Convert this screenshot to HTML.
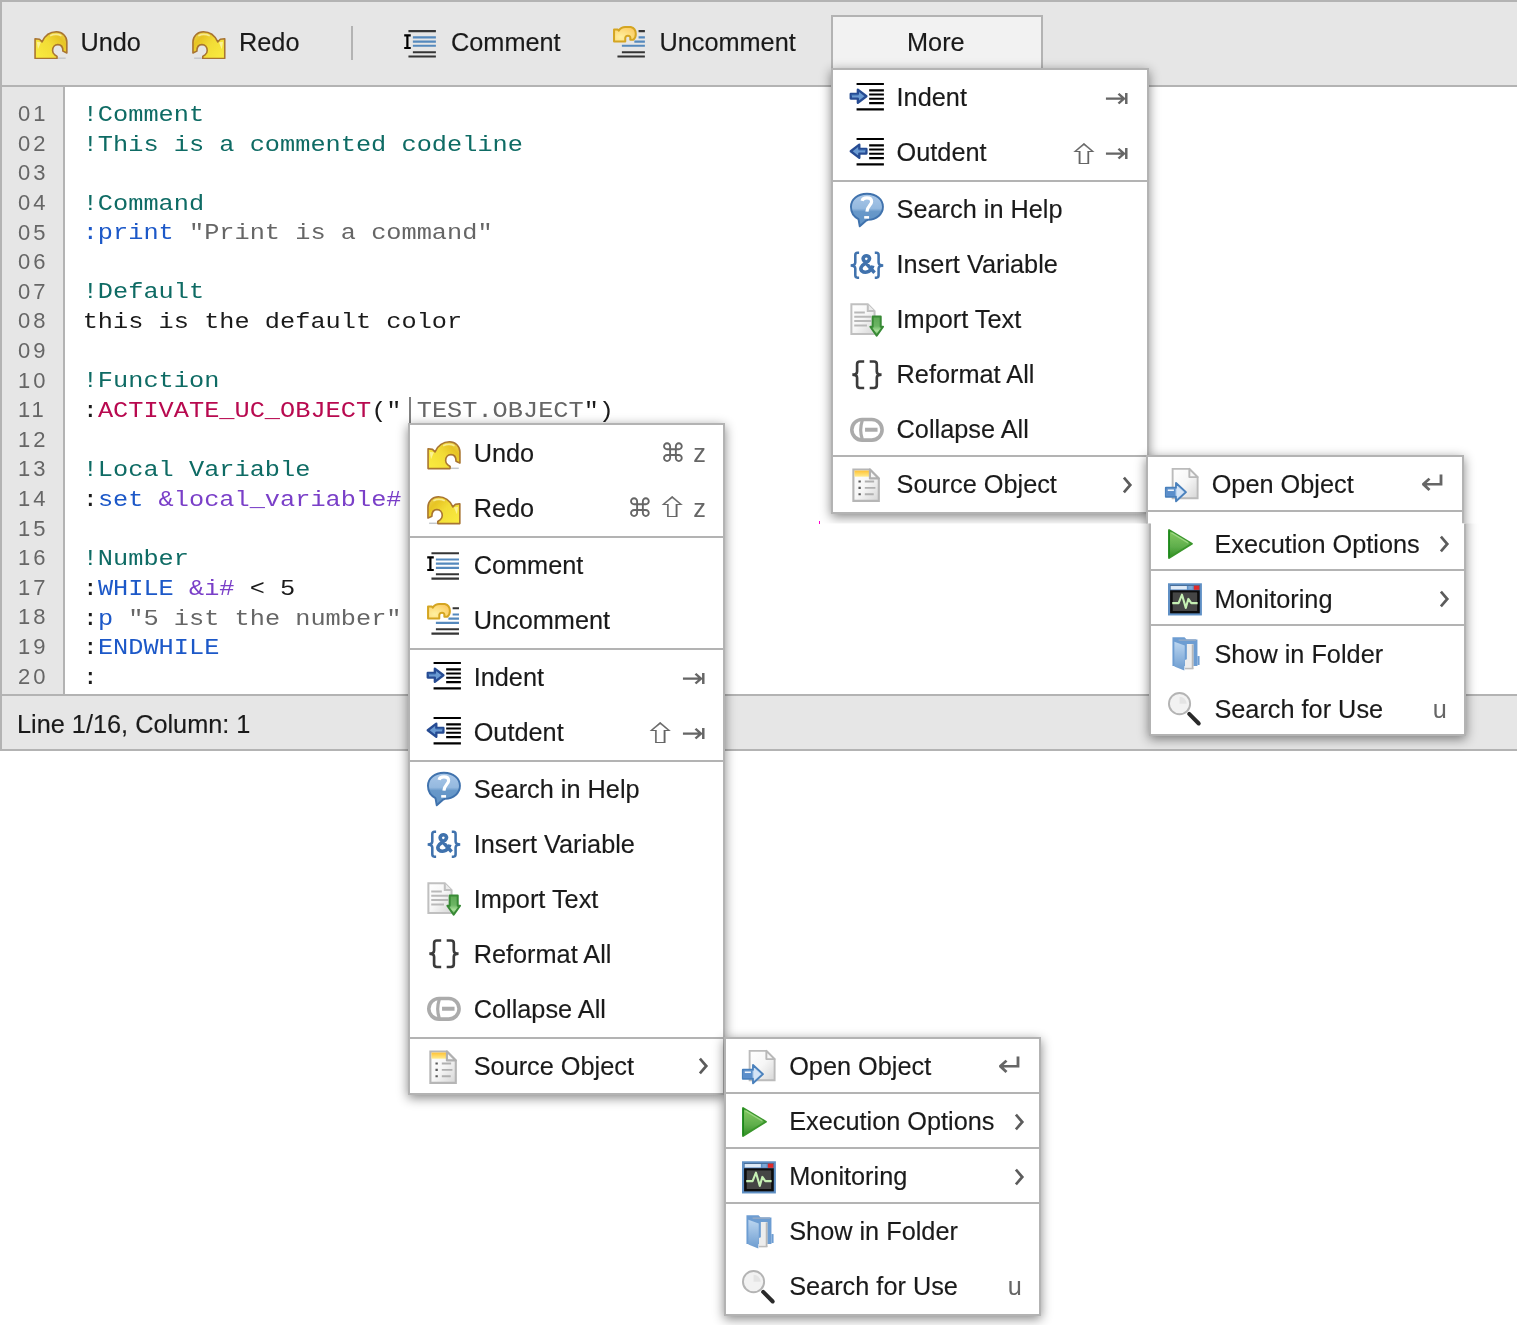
<!DOCTYPE html>
<html lang="en">
<head>
<meta charset="utf-8">
<title>Script Editor</title>
<style>
*{box-sizing:border-box;margin:0;padding:0}
html,body{width:1517px;height:1325px;overflow:hidden;background:#fff}
body{position:relative;will-change:transform;font-family:"Liberation Sans",sans-serif;font-size:25.3px;color:#1a1a1a}
/* ---------- editor chrome ---------- */
#toolbar{position:absolute;left:0;top:0;width:1517px;height:87px;background:#e6e6e6;border-top:2px solid #b3b3b3;border-bottom:2px solid #b3b3b3;border-left:2px solid #b3b3b3}
#toolbar .tb,#more-btn,#status,.menu .lb{-webkit-text-stroke:.15px #1a1a1a}
#toolbar .tb{position:absolute;top:-1px;height:83px;line-height:83px;white-space:nowrap}
#toolbar .tic{position:absolute;width:33.8px;height:33.8px}
#toolbar .tbsep{position:absolute;left:349px;top:24px;width:2px;height:34px;background:#b3b3b3}
#more-btn{position:absolute;left:831px;top:15px;width:212px;height:56px;background:#f2f2f2;border:2px solid #b3b3b3;text-align:center;line-height:50.4px;padding-right:2.4px}
#gutter{position:absolute;left:0;top:87px;width:65px;height:608px;background:#e6e6e6;border-left:2px solid #b3b3b3;border-right:2px solid #b3b3b3;font-family:"Liberation Sans",sans-serif;font-size:22px;letter-spacing:2.95px;color:#666;padding-top:12.1px}
#gutter div{height:29.61px;line-height:29.61px;padding-left:16px;white-space:pre}
#code{position:absolute;left:82.7px;top:101.1px;font-family:"Liberation Mono",monospace;font-size:25.3px;color:#1a1a1a;transform:scaleY(.87);transform-origin:0 0}
#code div{height:34.034px;line-height:34.034px;white-space:pre}
.c{color:#0e6b64}.k{color:#1c58c8}.s{color:#666}.f{color:#b8094f}.v{color:#7a3fc8}
#caret{position:absolute;left:409px;top:397px;width:2px;height:27px;background:#808080}
#speck{position:absolute;left:819px;top:521px;width:1px;height:3px;background:#f0c}
#status{position:absolute;left:0;top:694px;width:1517px;height:57px;background:#e6e6e6;border-top:2px solid #b3b3b3;border-bottom:2px solid #b3b3b3;border-left:2px solid #b3b3b3;line-height:56.4px;padding-left:15px;white-space:nowrap}
/* ---------- menus ---------- */
.menu{position:absolute;background:#fff;border:2px solid #b3b3b3;box-shadow:0 3px 10.5px rgba(0,0,0,.47)}
.menu .sep{position:absolute;left:0;right:0;height:2px;background:#b3b3b3}
.menu .ic{position:absolute;width:33.9px;height:33.9px;overflow:visible}
.menu .lb{position:absolute;height:56px;line-height:56px;white-space:nowrap}
.menu .g{position:absolute;color:#666;font-family:"DejaVu Sans",sans-serif;white-space:nowrap}
.menu .g.n{font-family:"Noto Sans CJK JP","DejaVu Sans",sans-serif;font-weight:700;-webkit-text-stroke:.35px #666}
.menu .k{position:absolute;color:#666;height:56px;line-height:56px}
.menu .chev{position:absolute;overflow:visible}
</style>
</head>
<body>
<svg width="0" height="0" style="position:absolute" aria-hidden="true">
<defs>
<filter id="soft" x="-20%" y="-20%" width="140%" height="140%"><feGaussianBlur stdDeviation="0.3"/></filter>
<filter id="soft2" x="-20%" y="-20%" width="140%" height="140%"><feGaussianBlur stdDeviation="0.42"/></filter>
<linearGradient id="gy" gradientUnits="userSpaceOnUse" x1="2" y1="15" x2="14" y2="3"><stop offset="0" stop-color="#f9ea3e"/><stop offset=".5" stop-color="#f2dc36"/><stop offset=".8" stop-color="#e7c424"/><stop offset="1" stop-color="#ecd04a"/></linearGradient>
<linearGradient id="gb" x1="0" y1="0" x2="0" y2="1"><stop offset="0" stop-color="#a9c7e8"/><stop offset=".45" stop-color="#95b9df"/><stop offset=".55" stop-color="#6798c9"/><stop offset="1" stop-color="#6193c6"/></linearGradient>
<linearGradient id="gg" x1="0" y1="0" x2="0" y2="1"><stop offset="0" stop-color="#5da854"/><stop offset=".5" stop-color="#6cb564"/><stop offset=".75" stop-color="#a9e09a"/><stop offset="1" stop-color="#4fa048"/></linearGradient>
<linearGradient id="gp" x1="0" y1="0" x2="0" y2="1"><stop offset="0" stop-color="#86cc62"/><stop offset=".6" stop-color="#5fae4c"/><stop offset="1" stop-color="#2f8f22"/></linearGradient>
<linearGradient id="gd" x1="0" y1="0" x2="1" y2="1"><stop offset="0" stop-color="#ffffff"/><stop offset=".5" stop-color="#f6f6f6"/><stop offset="1" stop-color="#d6d6d6"/></linearGradient>
<linearGradient id="gf" x1="0" y1="0" x2="0" y2="1"><stop offset="0" stop-color="#bcd6f0"/><stop offset="1" stop-color="#6c9cd0"/></linearGradient>
<linearGradient id="gh" x1="0" y1="0" x2="0" y2="1"><stop offset="0" stop-color="#ffc235"/><stop offset="1" stop-color="#ffeb8c"/></linearGradient>
<radialGradient id="gu" cx=".3" cy=".7" r=".9"><stop offset="0" stop-color="#fff0a0"/><stop offset=".6" stop-color="#fdd977"/><stop offset="1" stop-color="#fcc35c"/></radialGradient>

</defs>
</svg>

<div id="toolbar">
  <svg class="tic" style="left:31.8px;top:23.6px" viewBox="0 0 16 16"><g filter="url(#soft)"><path d="M11.3 15.25 H15" stroke="#c4c8cc" stroke-width=".7"/><path d="M.5 6 L2.6 6.3 L3.8 7.5 C5.1 4.7 7.6 2.75 10.6 2.75 C13.4 2.75 15.55 4.8 15.55 7.6 L15.55 12.8 L13.7 11.9 C13.7 10 12.8 8.8 11.3 8.8 C9.8 8.8 8.8 10 8.8 11.6 C8.8 12.4 9.1 13 9.7 13.5 L10.9 14.4 L10.9 15.4 L.5 15.4 Z" fill="url(#gy)" stroke="#a87430" stroke-width=".75" stroke-linejoin="round"/><path d="M1.3 7.5 L3.3 7.7 L1.9 11 Z" fill="#fdf6a8" opacity=".8"/><path d="M7.6 4.6 Q10.4 3.4 13 4.6" fill="none" stroke="#f8ee9c" stroke-width=".8" opacity=".9"/></g></svg>
  <div class="tb" style="left:78.4px">Undo</div>
  <svg class="tic" style="left:190px;top:23.6px" viewBox="0 0 16 16"><g filter="url(#soft)" transform="translate(16 0) scale(-1 1)"><path d="M11.3 15.25 H15" stroke="#c4c8cc" stroke-width=".7"/><path d="M.5 6 L2.6 6.3 L3.8 7.5 C5.1 4.7 7.6 2.75 10.6 2.75 C13.4 2.75 15.55 4.8 15.55 7.6 L15.55 12.8 L13.7 11.9 C13.7 10 12.8 8.8 11.3 8.8 C9.8 8.8 8.8 10 8.8 11.6 C8.8 12.4 9.1 13 9.7 13.5 L10.9 14.4 L10.9 15.4 L.5 15.4 Z" fill="url(#gy)" stroke="#a87430" stroke-width=".75" stroke-linejoin="round"/><path d="M1.3 7.5 L3.3 7.7 L1.9 11 Z" fill="#fdf6a8" opacity=".8"/><path d="M7.6 4.6 Q10.4 3.4 13 4.6" fill="none" stroke="#f8ee9c" stroke-width=".8" opacity=".9"/></g></svg>
  <div class="tb" style="left:237px">Redo</div>
  <div class="tbsep"></div>
  <svg class="tic" style="left:401.7px;top:23.5px" viewBox="0 0 16 16"><g filter="url(#soft)"><path d="M2.1 2.45H15.1M4.2 12.4H15.1M2.1 14.45H15.1" stroke="#353535" stroke-width="1"/><path d="M4.2 5.4H15.1M4.2 7.4H15.1M4.2 9.37H15.1" stroke="#5589bd" stroke-width="1"/><path d="M.1 4.45H3.2M.1 10.4H3.2" stroke="#000" stroke-width="1"/><path d="M1.6 4.45V10.4" stroke="#000" stroke-width="1.05"/></g></svg>
  <div class="tb" style="left:449px">Comment</div>
  <svg class="tic" style="left:610.9px;top:23.5px" viewBox="0 0 16 16"><g filter="url(#soft)"><path d="M12.1 2.45H15.1M4.2 12.4H15.1M2.1 14.45H15.1" stroke="#353535" stroke-width="1"/><path d="M12.1 5.4H15.1M10.1 7.4H15.1M4.2 9.37H15.1" stroke="#5589bd" stroke-width="1"/><path d="M.5 1.6 L2.2 1.6 L2.7 2.2 C3.5 1 4.6 .45 5.8 .45 L8.4 .45 C9.9 .8 10.8 2.2 10.8 3.8 C10.8 5.1 10.3 6 9.6 6.5 L8.2 6.5 L8.2 5.4 C8.1 4.8 7.7 4.6 7.1 4.6 C6.4 4.6 5.9 5 5.8 5.6 L5.8 7.3 L.5 7.3 Z" fill="url(#gu)" stroke="#d4a520" stroke-width=".95" stroke-linejoin="round"/></g></svg>
  <div class="tb" style="left:657.4px">Uncomment</div>
</div>
<div id="more-btn">More</div>

<div id="gutter"><div>01</div><div>02</div><div>03</div><div>04</div><div>05</div><div>06</div><div>07</div><div>08</div><div>09</div><div>10</div><div>11</div><div>12</div><div>13</div><div>14</div><div>15</div><div>16</div><div>17</div><div>18</div><div>19</div><div>20</div></div>

<div id="code"><div class="c">!Comment</div><div class="c">!This is a commented codeline</div><div> </div><div class="c">!Command</div><div><span class="k">:print</span> <span class="s">"Print is a command"</span></div><div> </div><div class="c">!Default</div><div>this is the default color</div><div> </div><div class="c">!Function</div><div>:<span class="f">ACTIVATE_UC_OBJECT</span>("<span class="s"> TEST.OBJECT</span>")</div><div> </div><div class="c">!Local Variable</div><div>:<span class="k">set</span> <span class="v">&amp;local_variable#</span></div><div> </div><div class="c">!Number</div><div>:<span class="k">WHILE</span> <span class="v">&amp;i#</span> &lt; 5</div><div>:<span class="k">p</span> <span class="s">"5 ist the number"</span></div><div>:<span class="k">ENDWHILE</span></div><div>:</div></div>
<div id="caret"></div>

<div id="status">Line 1/16, Column: 1</div>
<div id="speck"></div>


<div class="menu" id="m-more" style="left:831px;top:68px;width:318px;height:446px;clip-path:inset(-40px -40px -9.5px -40px);">
<div class="sep" style="top:110px"></div>
<div class="sep" style="top:385px"></div>
<svg class="ic" style="left:16.8px;top:10.9px" viewBox="0 0 16 16"><g filter="url(#soft)" transform="translate(0 -.3)"><path d="M3.1 1.7H16M3.1 13.72H16M9.05 4.7H16M9.05 6.7H16M9.05 8.7H16M9.05 10.72H16" stroke="#000" stroke-width="1"/><path d="M.35 6.4 H3.7 V4.4 L7.75 7.5 L3.7 10.6 V8.6 H.35 Z" fill="#6a9ad2" stroke="#264c93" stroke-width="1.1" stroke-linejoin="round"/><path d="M.6 6.9 H4" stroke="#3f6fb3" stroke-width=".5"/></g></svg>
<span class="lb" style="left:63.6px;top:-0.65px">Indent</span>
<span class="g" style="left:273.45px;top:15.21px;font-size:26.2px;line-height:26.2px;transform:scale(1.13,1);transform-origin:11px 13.89px">⇥</span>
<svg class="ic" style="left:16.8px;top:65.9px" viewBox="0 0 16 16"><g filter="url(#soft)" transform="translate(0 -.3)"><path d="M3.1 1.7H16M3.1 13.72H16M9.05 4.7H16M9.05 6.7H16M9.05 8.7H16M9.05 10.72H16" stroke="#000" stroke-width="1"/><path d="M7.75 6.4 H4.4 V4.4 L.35 7.5 L4.4 10.6 V8.6 H7.75 Z" fill="#6a9ad2" stroke="#264c93" stroke-width="1.1" stroke-linejoin="round"/><path d="M7.5 6.9 H4.1" stroke="#3f6fb3" stroke-width=".5"/></g></svg>
<span class="lb" style="left:63.6px;top:54.35px">Outdent</span>
<span class="g n" style="left:235.83px;top:66.93px;font-size:30.4px;line-height:30.4px;transform:scale(1,0.7);transform-origin:15.2px 16.57px">⇧</span><span class="g" style="left:273.45px;top:70.21px;font-size:26.2px;line-height:26.2px;transform:scale(1.13,1);transform-origin:11px 13.89px">⇥</span>
<svg class="ic" style="left:16.8px;top:122.9px" viewBox="0 0 16 16"><g filter="url(#soft)"><path d="M8 .35 C12.4 .35 15.55 3 15.55 6.5 C15.55 9.9 12.6 12.6 8.4 12.7 L7.4 13.2 L4.6 15.7 L4 12.3 C1.8 11.2 .45 9 .45 6.5 C.45 3 3.6 .35 8 .35 Z" fill="url(#gb)" stroke="#3f72ad" stroke-width=".9" stroke-linejoin="round"/><path d="M5.7 3.7 C5.9 2.8 6.8 2.3 8 2.3 C9.4 2.3 10.2 3 10.2 4.1 C10.2 5.6 8.1 6.2 8 8.8" fill="none" stroke="#fff" stroke-width="1.5"/><rect x="6.7" y="10.9" width="2.3" height="1.2" fill="#fff"/></g></svg>
<span class="lb" style="left:63.6px;top:111.35px">Search in Help</span>
<svg class="ic" style="left:16.8px;top:177.9px" viewBox="0 0 16 16"><g filter="url(#soft)" fill="none" stroke="#3f72ad" stroke-width="1.2"><path d="M4.3 2.2 H3.5 Q2.5 2.2 2.5 3.3 V6.9 Q2.5 8.3 .3 8.3 Q2.5 8.3 2.5 9.7 V12.9 Q2.5 14 3.5 14 H4.3"/><path d="M11.7 2.2 H12.5 Q13.5 2.2 13.5 3.3 V6.9 Q13.5 8.3 15.7 8.3 Q13.5 8.3 13.5 9.7 V12.9 Q13.5 14 12.5 14 H11.7"/><path d="M11.6 11.7 L6.7 6.2 Q5.7 4.9 6.7 4 Q7.7 3.3 8.8 4 Q9.7 5 8.7 6.1 L5.8 8.3 Q4.6 9.6 5.5 10.8 Q6.8 11.9 8.6 11.2 Q10.3 10.3 10.8 8.3" stroke-width="1.65"/></g></svg>
<span class="lb" style="left:63.6px;top:166.35px">Insert Variable</span>
<svg class="ic" style="left:16.8px;top:232.9px" viewBox="0 0 16 16"><g filter="url(#soft)"><path d="M.65 .6 H8.4 L11.6 3.8 V14.6 H.65 Z" fill="url(#gd)" stroke="#c0c0c0" stroke-width=".95"/><path d="M8.4 .6 V3.8 H11.6" fill="#ececec" stroke="#c0c0c0" stroke-width=".95"/><path d="M2 4.5H7M2 6.5H10M2 8.5H10M2 10.6H8" stroke="#b9b9b9" stroke-width=".95"/><path d="M10.7 6.4 H14.5 V11.2 H15.6 L12.6 15.4 L9.6 11.2 H10.7 Z" fill="url(#gg)" stroke="#388a36" stroke-width=".95" stroke-linejoin="round"/></g></svg>
<span class="lb" style="left:63.6px;top:221.35px">Import Text</span>
<svg class="ic" style="left:16.8px;top:287.9px" viewBox="0 0 16 16"><g filter="url(#soft)" transform="translate(0 -.35)" fill="none" stroke="#3a3a3a" stroke-width="1.25"><path d="M6.7 2 H4.7 Q3.35 2 3.35 3.3 V6.7 Q3.35 8.2 1.1 8.2 Q3.35 8.2 3.35 9.7 V13.2 Q3.35 14.5 4.7 14.5 H6.7"/><path d="M9.3 2 H11.3 Q12.65 2 12.65 3.3 V6.7 Q12.65 8.2 14.9 8.2 Q12.65 8.2 12.65 9.7 V13.2 Q12.65 14.5 11.3 14.5 H9.3"/></g></svg>
<span class="lb" style="left:63.6px;top:276.35px">Reformat All</span>
<svg class="ic" style="left:16.8px;top:342.9px" viewBox="0 0 16 16"><g filter="url(#soft)" transform="translate(0 -.4)" fill="none" stroke="#ababab"><rect x=".85" y="3.5" width="14.3" height="9.7" rx="4.85" ry="4.85" stroke-width="1.7" fill="#fff"/><path d="M5.8 3.9 Q4.3 8.3 5.8 12.8" stroke-width="1.5"/><path d="M7.1 8.3 H13" stroke-width="1.9"/></g></svg>
<span class="lb" style="left:63.6px;top:331.35px">Collapse All</span>
<svg class="ic" style="left:16.8px;top:397.9px" viewBox="0 0 16 16"><g filter="url(#soft)"><path d="M1.6 .7 H9.4 L13.6 4.9 V15.5 H1.6 Z" fill="url(#gd)" stroke="#b6b6b6" stroke-width="1"/><rect x="2.1" y="1.2" width="7" height="2.9" fill="url(#gh)"/><path d="M9.4 .7 V4.9 H13.6 Z" fill="#f6f6f6" stroke="#b0b0b0" stroke-width="1" stroke-linejoin="round"/><path d="M4 6.4H5.1M4 9.4H5.1M4 12.4H5.1" stroke="#5a5a5a" stroke-width="1"/><path d="M7 6.4H11.4M7 9.4H12M7 12.4H11.2" stroke="#b0b0b0" stroke-width=".9"/></g></svg>
<span class="lb" style="left:63.6px;top:386.35px">Source Object</span>
<svg class="chev" style="left:290px;top:405.7px" viewBox="0 0 10 18" width="10" height="18"><path d="M.9 1.6 L7.3 9 L.9 16.4" fill="none" stroke="#5c5c5c" stroke-width="2.7"/></svg>
</div>

<div class="menu" id="m-moresub-a" style="left:1146px;top:455px;width:318px;height:279px;clip-path:inset(-40px -40px 210.5px -40px);">
<div class="sep" style="top:53px"></div>
<svg class="ic" style="left:16.9px;top:10.65px" viewBox="0 0 16 16"><g filter="url(#soft)"><path d="M3.6 .4 H11.5 L15.4 4.3 V14.3 H3.6 Z" fill="url(#gd)" stroke="#bbbbbb" stroke-width=".9"/><path d="M11.5 .4 V4.3 H15.4 Z" fill="#f6f6f6" stroke="#b8b8b8" stroke-width=".9" stroke-linejoin="round"/><path d="M.4 9.3 H5.2 V7.1 L9.9 11.4 L5.2 15.7 V13.6 H.4 Z" fill="#b9d3ef" stroke="#4a80bc" stroke-width=".9" stroke-linejoin="round"/><path d="M.8 9.8 H5 V13.2 H.8 Z" fill="#5a8ecb"/><path d="M1.3 10.5 H4.2" stroke="#eef4fc" stroke-width=".75"/><path d="M5.6 8.4 L8.8 11.4 L5.6 14.4 Z" fill="#dce9f7" opacity=".8"/></g></svg>
<span class="lb" style="left:63.7px;top:-0.9px">Open Object</span>
<span class="g" style="left:272.99px;top:11.17px;font-size:31px;line-height:31px;transform:scale(1.08,1);transform-origin:10.85px 14.88px">↵</span>
</div>

<div class="menu" id="m-moresub-b" style="left:1149px;top:459px;width:317px;height:277px;clip-path:inset(64.5px -40px -40px -40px);">
<div class="sep" style="top:108px"></div>
<div class="sep" style="top:163px"></div>
<svg class="ic" style="left:16.6px;top:66.05px" viewBox="0 0 16 16"><g filter="url(#soft)"><path d="M.5 1.4 L11.3 7.9 L.5 14.6 Z" fill="url(#gp)" stroke="#3a962c" stroke-width=".9" stroke-linejoin="round"/><path d="M.55 1.6 V14.4" stroke="#1f8a1f" stroke-width=".8"/><path d="M1.6 2.7 L9.6 7.5" stroke="#a6dc8c" stroke-width=".7" opacity=".8"/></g></svg>
<span class="lb" style="left:63.4px;top:54.5px">Execution Options</span>
<svg class="chev" style="left:289px;top:73.85px" viewBox="0 0 10 18" width="10" height="18"><path d="M.9 1.6 L7.3 9 L.9 16.4" fill="none" stroke="#5c5c5c" stroke-width="2.7"/></svg>
<svg class="ic" style="left:16.6px;top:121.1px" viewBox="0 0 16 16"><g filter="url(#soft)" transform="translate(0 .6)"><rect x=".5" y=".5" width="15" height="14.2" fill="#0a0a0a" stroke="#5f8fc4" stroke-width="1"/><rect x="1" y="1" width="14" height="2.3" fill="#5f8fc4"/><rect x="1.3" y="1.3" width="7.6" height="1.6" fill="#dfeaf6"/><rect x="9.6" y="1.3" width="2" height="1.6" fill="#7fa8d4"/><rect x="12.2" y="1.1" width="2.6" height="2" fill="#e02a2a"/><rect x="2.2" y="4.3" width="11.6" height="8.8" fill="#444"/><path d="M2 9.4 H5 L6.6 5.4 L8.4 11.6 L9.6 7.4 L11 9.4 H14" fill="none" stroke="#c6f0b4" stroke-width="1" stroke-linejoin="round"/></g></svg>
<span class="lb" style="left:63.4px;top:109.55px">Monitoring</span>
<svg class="chev" style="left:289px;top:128.9px" viewBox="0 0 10 18" width="10" height="18"><path d="M.9 1.6 L7.3 9 L.9 16.4" fill="none" stroke="#5c5c5c" stroke-width="2.7"/></svg>
<svg class="ic" style="left:16.6px;top:176.1px" viewBox="0 0 16 16"><g filter="url(#soft)" transform="translate(0 .3)"><path d="M2.1 -.2 H7.8 L8.8 .9 H13.9 V13.4 H2.1 Z" fill="#6d9dd2"/><rect x="13.9" y="8.7" width="1" height="4.2" fill="#6d9dd2"/><path d="M5 1.2 H13.2" stroke="#8fa9c8" stroke-width=".8"/><path d="M8.9 3 H12 V14.9 H8 V10.6 L8.9 10.2 Z" fill="#ededed"/><path d="M11.6 3.2 V14.7" stroke="#b8b8b8" stroke-width=".8"/><path d="M8 14.6 H12" stroke="#bdbdbd" stroke-width=".7"/><path d="M3 1.9 L7.9 3.7 V10 L7.7 15.5 L3 13.6 Z" fill="url(#gf)"/></g></svg>
<span class="lb" style="left:63.4px;top:164.55px">Show in Folder</span>
<svg class="ic" style="left:16.6px;top:231.15px" viewBox="0 0 16 16"><g filter="url(#soft)" transform="translate(0 .35)"><circle cx="5.45" cy="5.15" r="5" fill="#f2f2f2" stroke="#b4b4b4" stroke-width=".9"/><path d="M5.45 1.9 A3.3 3.3 0 0 1 8.8 5.15 H5.45 Z" fill="#e4e4e4"/><path d="M10 10 L14.5 14.5" stroke="#2a2a2a" stroke-width="1.9" stroke-linecap="round"/></g></svg>
<span class="lb" style="left:63.4px;top:219.6px">Search for Use</span>
<span class="k" style="left:281.8px;top:219.6px">u</span>
</div>

<div class="menu" id="m-ctx" style="left:408px;top:423px;width:317px;height:672px;">
<div class="sep" style="top:111px"></div>
<div class="sep" style="top:223px"></div>
<div class="sep" style="top:335px"></div>
<div class="sep" style="top:612px"></div>
<svg class="ic" style="left:16.9px;top:11.4px" viewBox="0 0 16 16"><g filter="url(#soft)"><path d="M11.3 15.25 H15" stroke="#c4c8cc" stroke-width=".7"/><path d="M.5 6 L2.6 6.3 L3.8 7.5 C5.1 4.7 7.6 2.75 10.6 2.75 C13.4 2.75 15.55 4.8 15.55 7.6 L15.55 12.8 L13.7 11.9 C13.7 10 12.8 8.8 11.3 8.8 C9.8 8.8 8.8 10 8.8 11.6 C8.8 12.4 9.1 13 9.7 13.5 L10.9 14.4 L10.9 15.4 L.5 15.4 Z" fill="url(#gy)" stroke="#a87430" stroke-width=".75" stroke-linejoin="round"/><path d="M1.3 7.5 L3.3 7.7 L1.9 11 Z" fill="#fdf6a8" opacity=".8"/><path d="M7.6 4.6 Q10.4 3.4 13 4.6" fill="none" stroke="#f8ee9c" stroke-width=".8" opacity=".9"/></g></svg>
<span class="lb" style="left:63.7px;top:-0.15px">Undo</span>
<span class="g" style="left:249.9px;top:16.23px;font-size:25.8px;line-height:25.8px">⌘</span><span class="k" style="left:283.22px;top:-0.15px">z</span>
<svg class="ic" style="left:16.9px;top:66.4px" viewBox="0 0 16 16"><g filter="url(#soft)" transform="translate(16 0) scale(-1 1)"><path d="M11.3 15.25 H15" stroke="#c4c8cc" stroke-width=".7"/><path d="M.5 6 L2.6 6.3 L3.8 7.5 C5.1 4.7 7.6 2.75 10.6 2.75 C13.4 2.75 15.55 4.8 15.55 7.6 L15.55 12.8 L13.7 11.9 C13.7 10 12.8 8.8 11.3 8.8 C9.8 8.8 8.8 10 8.8 11.6 C8.8 12.4 9.1 13 9.7 13.5 L10.9 14.4 L10.9 15.4 L.5 15.4 Z" fill="url(#gy)" stroke="#a87430" stroke-width=".75" stroke-linejoin="round"/><path d="M1.3 7.5 L3.3 7.7 L1.9 11 Z" fill="#fdf6a8" opacity=".8"/><path d="M7.6 4.6 Q10.4 3.4 13 4.6" fill="none" stroke="#f8ee9c" stroke-width=".8" opacity=".9"/></g></svg>
<span class="lb" style="left:63.7px;top:54.85px">Redo</span>
<span class="g" style="left:216.9px;top:71.23px;font-size:25.8px;line-height:25.8px">⌘</span><span class="g n" style="left:247.03px;top:65.43px;font-size:30.4px;line-height:30.4px;transform:scale(1,0.7);transform-origin:15.2px 16.57px">⇧</span><span class="k" style="left:283.22px;top:54.85px">z</span>
<svg class="ic" style="left:16.9px;top:123.4px" viewBox="0 0 16 16"><g filter="url(#soft)"><path d="M2.1 2.45H15.1M4.2 12.4H15.1M2.1 14.45H15.1" stroke="#353535" stroke-width="1"/><path d="M4.2 5.4H15.1M4.2 7.4H15.1M4.2 9.37H15.1" stroke="#5589bd" stroke-width="1"/><path d="M.1 4.45H3.2M.1 10.4H3.2" stroke="#000" stroke-width="1"/><path d="M1.6 4.45V10.4" stroke="#000" stroke-width="1.05"/></g></svg>
<span class="lb" style="left:63.7px;top:111.85px">Comment</span>
<svg class="ic" style="left:16.9px;top:178.4px" viewBox="0 0 16 16"><g filter="url(#soft)"><path d="M12.1 2.45H15.1M4.2 12.4H15.1M2.1 14.45H15.1" stroke="#353535" stroke-width="1"/><path d="M12.1 5.4H15.1M10.1 7.4H15.1M4.2 9.37H15.1" stroke="#5589bd" stroke-width="1"/><path d="M.5 1.6 L2.2 1.6 L2.7 2.2 C3.5 1 4.6 .45 5.8 .45 L8.4 .45 C9.9 .8 10.8 2.2 10.8 3.8 C10.8 5.1 10.3 6 9.6 6.5 L8.2 6.5 L8.2 5.4 C8.1 4.8 7.7 4.6 7.1 4.6 C6.4 4.6 5.9 5 5.8 5.6 L5.8 7.3 L.5 7.3 Z" fill="url(#gu)" stroke="#d4a520" stroke-width=".95" stroke-linejoin="round"/></g></svg>
<span class="lb" style="left:63.7px;top:166.85px">Uncomment</span>
<svg class="ic" style="left:16.9px;top:235.4px" viewBox="0 0 16 16"><g filter="url(#soft)" transform="translate(0 -.3)"><path d="M3.1 1.7H16M3.1 13.72H16M9.05 4.7H16M9.05 6.7H16M9.05 8.7H16M9.05 10.72H16" stroke="#000" stroke-width="1"/><path d="M.35 6.4 H3.7 V4.4 L7.75 7.5 L3.7 10.6 V8.6 H.35 Z" fill="#6a9ad2" stroke="#264c93" stroke-width="1.1" stroke-linejoin="round"/><path d="M.6 6.9 H4" stroke="#3f6fb3" stroke-width=".5"/></g></svg>
<span class="lb" style="left:63.7px;top:223.85px">Indent</span>
<span class="g" style="left:272.65px;top:239.71px;font-size:26.2px;line-height:26.2px;transform:scale(1.13,1);transform-origin:11px 13.89px">⇥</span>
<svg class="ic" style="left:16.9px;top:290.4px" viewBox="0 0 16 16"><g filter="url(#soft)" transform="translate(0 -.3)"><path d="M3.1 1.7H16M3.1 13.72H16M9.05 4.7H16M9.05 6.7H16M9.05 8.7H16M9.05 10.72H16" stroke="#000" stroke-width="1"/><path d="M7.75 6.4 H4.4 V4.4 L.35 7.5 L4.4 10.6 V8.6 H7.75 Z" fill="#6a9ad2" stroke="#264c93" stroke-width="1.1" stroke-linejoin="round"/><path d="M7.5 6.9 H4.1" stroke="#3f6fb3" stroke-width=".5"/></g></svg>
<span class="lb" style="left:63.7px;top:278.85px">Outdent</span>
<span class="g n" style="left:235.03px;top:291.43px;font-size:30.4px;line-height:30.4px;transform:scale(1,0.7);transform-origin:15.2px 16.57px">⇧</span><span class="g" style="left:272.65px;top:294.71px;font-size:26.2px;line-height:26.2px;transform:scale(1.13,1);transform-origin:11px 13.89px">⇥</span>
<svg class="ic" style="left:16.9px;top:347.4px" viewBox="0 0 16 16"><g filter="url(#soft)"><path d="M8 .35 C12.4 .35 15.55 3 15.55 6.5 C15.55 9.9 12.6 12.6 8.4 12.7 L7.4 13.2 L4.6 15.7 L4 12.3 C1.8 11.2 .45 9 .45 6.5 C.45 3 3.6 .35 8 .35 Z" fill="url(#gb)" stroke="#3f72ad" stroke-width=".9" stroke-linejoin="round"/><path d="M5.7 3.7 C5.9 2.8 6.8 2.3 8 2.3 C9.4 2.3 10.2 3 10.2 4.1 C10.2 5.6 8.1 6.2 8 8.8" fill="none" stroke="#fff" stroke-width="1.5"/><rect x="6.7" y="10.9" width="2.3" height="1.2" fill="#fff"/></g></svg>
<span class="lb" style="left:63.7px;top:335.85px">Search in Help</span>
<svg class="ic" style="left:16.9px;top:402.4px" viewBox="0 0 16 16"><g filter="url(#soft)" fill="none" stroke="#3f72ad" stroke-width="1.2"><path d="M4.3 2.2 H3.5 Q2.5 2.2 2.5 3.3 V6.9 Q2.5 8.3 .3 8.3 Q2.5 8.3 2.5 9.7 V12.9 Q2.5 14 3.5 14 H4.3"/><path d="M11.7 2.2 H12.5 Q13.5 2.2 13.5 3.3 V6.9 Q13.5 8.3 15.7 8.3 Q13.5 8.3 13.5 9.7 V12.9 Q13.5 14 12.5 14 H11.7"/><path d="M11.6 11.7 L6.7 6.2 Q5.7 4.9 6.7 4 Q7.7 3.3 8.8 4 Q9.7 5 8.7 6.1 L5.8 8.3 Q4.6 9.6 5.5 10.8 Q6.8 11.9 8.6 11.2 Q10.3 10.3 10.8 8.3" stroke-width="1.65"/></g></svg>
<span class="lb" style="left:63.7px;top:390.85px">Insert Variable</span>
<svg class="ic" style="left:16.9px;top:457.4px" viewBox="0 0 16 16"><g filter="url(#soft)"><path d="M.65 .6 H8.4 L11.6 3.8 V14.6 H.65 Z" fill="url(#gd)" stroke="#c0c0c0" stroke-width=".95"/><path d="M8.4 .6 V3.8 H11.6" fill="#ececec" stroke="#c0c0c0" stroke-width=".95"/><path d="M2 4.5H7M2 6.5H10M2 8.5H10M2 10.6H8" stroke="#b9b9b9" stroke-width=".95"/><path d="M10.7 6.4 H14.5 V11.2 H15.6 L12.6 15.4 L9.6 11.2 H10.7 Z" fill="url(#gg)" stroke="#388a36" stroke-width=".95" stroke-linejoin="round"/></g></svg>
<span class="lb" style="left:63.7px;top:445.85px">Import Text</span>
<svg class="ic" style="left:16.9px;top:512.4px" viewBox="0 0 16 16"><g filter="url(#soft)" transform="translate(0 -.35)" fill="none" stroke="#3a3a3a" stroke-width="1.25"><path d="M6.7 2 H4.7 Q3.35 2 3.35 3.3 V6.7 Q3.35 8.2 1.1 8.2 Q3.35 8.2 3.35 9.7 V13.2 Q3.35 14.5 4.7 14.5 H6.7"/><path d="M9.3 2 H11.3 Q12.65 2 12.65 3.3 V6.7 Q12.65 8.2 14.9 8.2 Q12.65 8.2 12.65 9.7 V13.2 Q12.65 14.5 11.3 14.5 H9.3"/></g></svg>
<span class="lb" style="left:63.7px;top:500.85px">Reformat All</span>
<svg class="ic" style="left:16.9px;top:567.4px" viewBox="0 0 16 16"><g filter="url(#soft)" transform="translate(0 -.4)" fill="none" stroke="#ababab"><rect x=".85" y="3.5" width="14.3" height="9.7" rx="4.85" ry="4.85" stroke-width="1.7" fill="#fff"/><path d="M5.8 3.9 Q4.3 8.3 5.8 12.8" stroke-width="1.5"/><path d="M7.1 8.3 H13" stroke-width="1.9"/></g></svg>
<span class="lb" style="left:63.7px;top:555.85px">Collapse All</span>
<svg class="ic" style="left:16.9px;top:624.5px" viewBox="0 0 16 16"><g filter="url(#soft)"><path d="M1.6 .7 H9.4 L13.6 4.9 V15.5 H1.6 Z" fill="url(#gd)" stroke="#b6b6b6" stroke-width="1"/><rect x="2.1" y="1.2" width="7" height="2.9" fill="url(#gh)"/><path d="M9.4 .7 V4.9 H13.6 Z" fill="#f6f6f6" stroke="#b0b0b0" stroke-width="1" stroke-linejoin="round"/><path d="M4 6.4H5.1M4 9.4H5.1M4 12.4H5.1" stroke="#5a5a5a" stroke-width="1"/><path d="M7 6.4H11.4M7 9.4H12M7 12.4H11.2" stroke="#b0b0b0" stroke-width=".9"/></g></svg>
<span class="lb" style="left:63.7px;top:612.95px">Source Object</span>
<svg class="chev" style="left:289.2px;top:632.3px" viewBox="0 0 10 18" width="10" height="18"><path d="M.9 1.6 L7.3 9 L.9 16.4" fill="none" stroke="#5c5c5c" stroke-width="2.7"/></svg>
</div>

<div class="menu" id="m-ctxsub" style="left:724px;top:1037px;width:317px;height:279px;">
<div class="sep" style="top:53px"></div>
<div class="sep" style="top:108px"></div>
<div class="sep" style="top:163px"></div>
<svg class="ic" style="left:16.4px;top:10.75px" viewBox="0 0 16 16"><g filter="url(#soft)"><path d="M3.6 .4 H11.5 L15.4 4.3 V14.3 H3.6 Z" fill="url(#gd)" stroke="#bbbbbb" stroke-width=".9"/><path d="M11.5 .4 V4.3 H15.4 Z" fill="#f6f6f6" stroke="#b8b8b8" stroke-width=".9" stroke-linejoin="round"/><path d="M.4 9.3 H5.2 V7.1 L9.9 11.4 L5.2 15.7 V13.6 H.4 Z" fill="#b9d3ef" stroke="#4a80bc" stroke-width=".9" stroke-linejoin="round"/><path d="M.8 9.8 H5 V13.2 H.8 Z" fill="#5a8ecb"/><path d="M1.3 10.5 H4.2" stroke="#eef4fc" stroke-width=".75"/><path d="M5.6 8.4 L8.8 11.4 L5.6 14.4 Z" fill="#dce9f7" opacity=".8"/></g></svg>
<span class="lb" style="left:63.2px;top:-0.8px">Open Object</span>
<span class="g" style="left:272.19px;top:11.27px;font-size:31px;line-height:31px;transform:scale(1.08,1);transform-origin:10.85px 14.88px">↵</span>
<svg class="ic" style="left:16.4px;top:65.75px" viewBox="0 0 16 16"><g filter="url(#soft)"><path d="M.5 1.4 L11.3 7.9 L.5 14.6 Z" fill="url(#gp)" stroke="#3a962c" stroke-width=".9" stroke-linejoin="round"/><path d="M.55 1.6 V14.4" stroke="#1f8a1f" stroke-width=".8"/><path d="M1.6 2.7 L9.6 7.5" stroke="#a6dc8c" stroke-width=".7" opacity=".8"/></g></svg>
<span class="lb" style="left:63.2px;top:54.2px">Execution Options</span>
<svg class="chev" style="left:289px;top:73.55px" viewBox="0 0 10 18" width="10" height="18"><path d="M.9 1.6 L7.3 9 L.9 16.4" fill="none" stroke="#5c5c5c" stroke-width="2.7"/></svg>
<svg class="ic" style="left:16.4px;top:120.8px" viewBox="0 0 16 16"><g filter="url(#soft)" transform="translate(0 .6)"><rect x=".5" y=".5" width="15" height="14.2" fill="#0a0a0a" stroke="#5f8fc4" stroke-width="1"/><rect x="1" y="1" width="14" height="2.3" fill="#5f8fc4"/><rect x="1.3" y="1.3" width="7.6" height="1.6" fill="#dfeaf6"/><rect x="9.6" y="1.3" width="2" height="1.6" fill="#7fa8d4"/><rect x="12.2" y="1.1" width="2.6" height="2" fill="#e02a2a"/><rect x="2.2" y="4.3" width="11.6" height="8.8" fill="#444"/><path d="M2 9.4 H5 L6.6 5.4 L8.4 11.6 L9.6 7.4 L11 9.4 H14" fill="none" stroke="#c6f0b4" stroke-width="1" stroke-linejoin="round"/></g></svg>
<span class="lb" style="left:63.2px;top:109.25px">Monitoring</span>
<svg class="chev" style="left:289px;top:128.6px" viewBox="0 0 10 18" width="10" height="18"><path d="M.9 1.6 L7.3 9 L.9 16.4" fill="none" stroke="#5c5c5c" stroke-width="2.7"/></svg>
<svg class="ic" style="left:16.4px;top:175.8px" viewBox="0 0 16 16"><g filter="url(#soft)" transform="translate(0 .3)"><path d="M2.1 -.2 H7.8 L8.8 .9 H13.9 V13.4 H2.1 Z" fill="#6d9dd2"/><rect x="13.9" y="8.7" width="1" height="4.2" fill="#6d9dd2"/><path d="M5 1.2 H13.2" stroke="#8fa9c8" stroke-width=".8"/><path d="M8.9 3 H12 V14.9 H8 V10.6 L8.9 10.2 Z" fill="#ededed"/><path d="M11.6 3.2 V14.7" stroke="#b8b8b8" stroke-width=".8"/><path d="M8 14.6 H12" stroke="#bdbdbd" stroke-width=".7"/><path d="M3 1.9 L7.9 3.7 V10 L7.7 15.5 L3 13.6 Z" fill="url(#gf)"/></g></svg>
<span class="lb" style="left:63.2px;top:164.25px">Show in Folder</span>
<svg class="ic" style="left:16.4px;top:230.85px" viewBox="0 0 16 16"><g filter="url(#soft)" transform="translate(0 .35)"><circle cx="5.45" cy="5.15" r="5" fill="#f2f2f2" stroke="#b4b4b4" stroke-width=".9"/><path d="M5.45 1.9 A3.3 3.3 0 0 1 8.8 5.15 H5.45 Z" fill="#e4e4e4"/><path d="M10 10 L14.5 14.5" stroke="#2a2a2a" stroke-width="1.9" stroke-linecap="round"/></g></svg>
<span class="lb" style="left:63.2px;top:219.3px">Search for Use</span>
<span class="k" style="left:281.8px;top:219.3px">u</span>
</div>
</body>
</html>
